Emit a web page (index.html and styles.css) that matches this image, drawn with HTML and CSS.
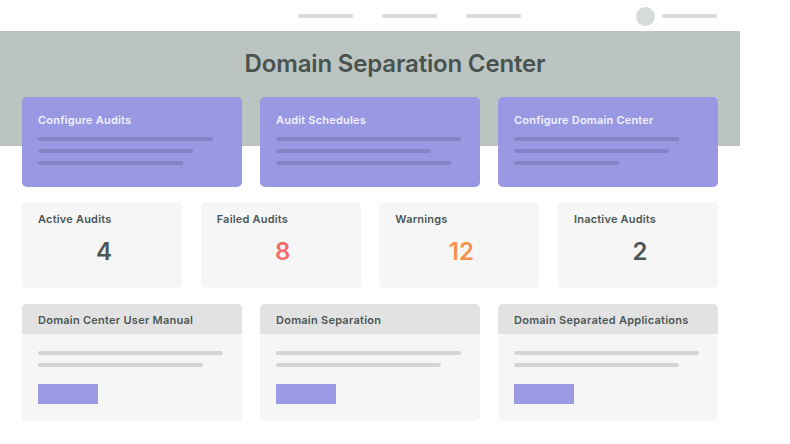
FILE: index.html
```html
<!DOCTYPE html>
<html lang="en">
<head>
<meta charset="utf-8">
<title>Domain Separation Center</title>
<link rel="stylesheet" href="styles.css">
</head>
<body>
<div class="page">
  <nav class="topnav">
    <div class="nav-links">
      <span class="bar nav-bar"></span>
      <span class="bar nav-bar"></span>
      <span class="bar nav-bar"></span>
    </div>
    <div class="nav-user">
      <span class="avatar"></span>
      <span class="bar nav-bar"></span>
    </div>
  </nav>

  <section class="hero">
    <h1 class="hero-title">Domain Separation Center</h1>
    <div class="row">
      <div class="action-card">
        <div class="action-title">Configure Audits</div>
        <div class="lines">
          <span class="bar action-line w175"></span>
          <span class="bar action-line w155"></span>
          <span class="bar action-line w145"></span>
        </div>
      </div>
      <div class="action-card">
        <div class="action-title">Audit Schedules</div>
        <div class="lines">
          <span class="bar action-line w185"></span>
          <span class="bar action-line w155"></span>
          <span class="bar action-line w175"></span>
        </div>
      </div>
      <div class="action-card">
        <div class="action-title">Configure Domain Center</div>
        <div class="lines">
          <span class="bar action-line w165"></span>
          <span class="bar action-line w155"></span>
          <span class="bar action-line w105"></span>
        </div>
      </div>
    </div>
  </section>

  <section class="stats">
    <div class="stat-card">
      <div class="stat-label">Active Audits</div>
      <div class="stat-value">4</div>
    </div>
    <div class="stat-card">
      <div class="stat-label">Failed Audits</div>
      <div class="stat-value failed">8</div>
    </div>
    <div class="stat-card">
      <div class="stat-label">Warnings</div>
      <div class="stat-value warning">12</div>
    </div>
    <div class="stat-card">
      <div class="stat-label">Inactive Audits</div>
      <div class="stat-value">2</div>
    </div>
  </section>

  <section class="row resources">
    <div class="res-card">
      <div class="res-head">Domain Center User Manual</div>
      <div class="res-body">
        <div class="lines">
          <span class="bar res-line w185"></span>
          <span class="bar res-line w165"></span>
        </div>
        <span class="res-btn"></span>
      </div>
    </div>
    <div class="res-card">
      <div class="res-head">Domain Separation</div>
      <div class="res-body">
        <div class="lines">
          <span class="bar res-line w185"></span>
          <span class="bar res-line w165"></span>
        </div>
        <span class="res-btn"></span>
      </div>
    </div>
    <div class="res-card">
      <div class="res-head">Domain Separated Applications</div>
      <div class="res-body">
        <div class="lines">
          <span class="bar res-line w185"></span>
          <span class="bar res-line w165"></span>
        </div>
        <span class="res-btn"></span>
      </div>
    </div>
  </section>
</div>
</body>
</html>
```

FILE: styles.css
```css
* { box-sizing: border-box; }

html, body {
  margin: 0;
  padding: 0;
  background: #ffffff;
}

body {
  font-family: Inter, "Noto Sans", "Liberation Sans", sans-serif;
  color: #4c5755;
  width: 790px;
  height: 444px;
  overflow: hidden;
}

.page {
  width: 790px;
}

.bar {
  display: block;
  height: 4px;
  border-radius: 2px;
}

/* top nav */
.topnav {
  width: 740px;
  height: 31px;
  display: flex;
  align-items: center;
  padding: 1px 23px 0 298px;
}

.nav-links {
  display: flex;
  gap: 29px;
}

.nav-bar {
  width: 55px;
  background: #d6dad9;
}

.nav-user {
  margin-left: auto;
  display: flex;
  align-items: center;
  gap: 7px;
}

.avatar {
  width: 19px;
  height: 19px;
  border-radius: 50%;
  background: #d6dad9;
}

/* hero */
.hero {
  background: linear-gradient(#bcc4c1, #bcc4c1) no-repeat 0 0 / 740px 115px;
  padding-top: 18px;
}

.hero-title {
  margin: 0 0 18px;
  text-align: center;
  font-size: 24px;
  line-height: 30px;
  font-weight: 600;
  color: #48534f;
  letter-spacing: -0.17px;
}

.row {
  width: 740px;
  padding: 0 22px;
  display: grid;
  grid-template-columns: repeat(3, 1fr);
  gap: 18px;
}

.action-card {
  height: 90px;
  background: #9998e3;
  border-radius: 5px;
  padding: 16px 16px 0;
}

.action-title {
  font-size: 11px;
  line-height: 14px;
  font-weight: 600;
  letter-spacing: 0.2px;
  color: #f1f1fd;
  margin-bottom: 10px;
}

.lines {
  display: flex;
  flex-direction: column;
  gap: 8px;
}

.action-line { background: #8483c5; }

.w105 { width: 105px; }
.w145 { width: 145px; }
.w155 { width: 155px; }
.w165 { width: 165px; }
.w175 { width: 175px; }
.w185 { width: 185px; }

/* stats */
.stats {
  width: 740px;
  padding: 0 22px;
  margin-top: 15px;
  display: grid;
  grid-template-columns: repeat(4, 1fr);
  gap: 18.67px;
}

.stat-card {
  height: 86px;
  background: #f6f6f6;
  border-radius: 5px;
  padding: 10px 16px 0;
}

.stat-label {
  font-size: 11px;
  line-height: 14px;
  font-weight: 600;
  letter-spacing: 0.2px;
  color: #4c5755;
}

.stat-value {
  margin-top: 11px;
  text-align: center;
  font-size: 24px;
  line-height: 30px;
  font-weight: 600;
  color: #4c5755;
  padding-left: 4px;
}

.stat-value.failed { color: #f76d69; }
.stat-value.warning { color: #f8924a; }

/* resources */
.resources {
  margin-top: 16px;
}

.res-card {
  background: #f6f6f6;
  border-radius: 5px;
  overflow: hidden;
  height: 117px;
}

.res-head {
  height: 30px;
  background: #e2e2e2;
  padding: 9px 16px 0;
  font-size: 11px;
  line-height: 14px;
  font-weight: 600;
  letter-spacing: 0.25px;
  color: #4c5755;
}

.res-body {
  padding: 17px 16px 0;
}

.res-line { background: #d1d5d3; }

.res-btn {
  display: block;
  margin-top: 17px;
  width: 60px;
  height: 20px;
  background: #9b9ae4;
}
```
